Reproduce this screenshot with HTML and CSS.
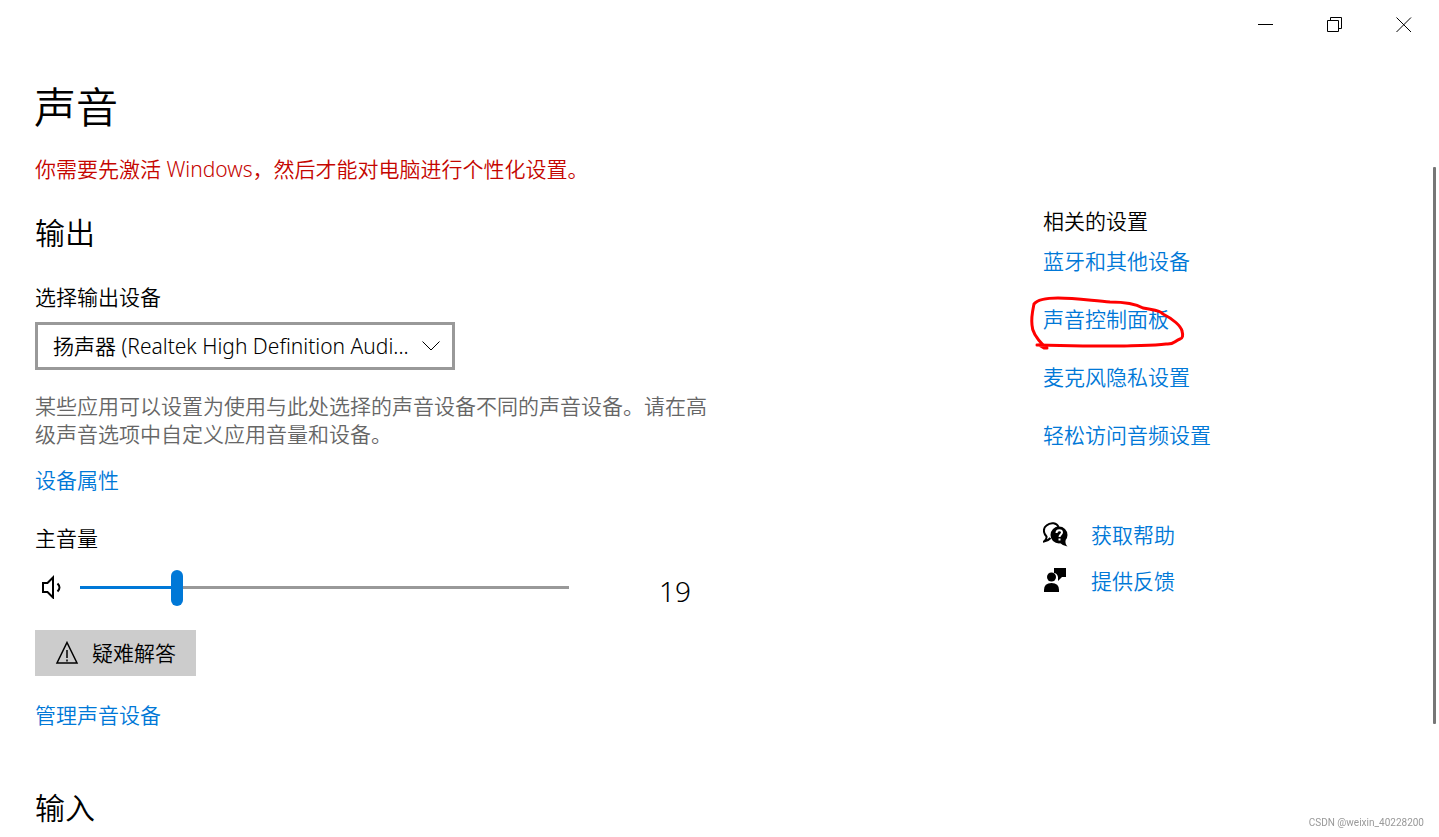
FILE: index.html
```html
<!DOCTYPE html>
<html lang="zh-CN">
<head>
    <meta charset="UTF-8">
    <meta name="viewport" content="width=device-width, initial-scale=1.0">
    <title>设置 - 声音</title>
    <link rel="stylesheet" href="styles.css">
</head>
<body>

    <header class="titlebar">
        <button type="button" class="window-button" aria-label="最小化">
            <svg width="16" height="16" viewBox="0 0 16 16"><path d="M0 7.5h15"/></svg>
        </button>
        <button type="button" class="window-button" aria-label="还原">
            <svg width="16" height="16" viewBox="0 0 16 16"><path d="M.5 3.5h11v11H.5zM3.5 3.5v-3h11v11h-3"/></svg>
        </button>
        <button type="button" class="window-button" aria-label="关闭">
            <svg width="16" height="16" viewBox="0 0 16 16"><path d="M.5.5l14.500 14.500M15 .5L.5 15"/></svg>
        </button>
    </header>

    <h1 class="page-title">声音</h1>

    <div class="layout">
        <main class="content">
            <p class="notice">你需要先激活 Windows，然后才能对电脑进行个性化设置。</p>

            <h2 class="section-title">输出</h2>
            <label class="field-label" for="outputDevice">选择输出设备</label>
            <div class="select-box">
                <select id="outputDevice" class="select">
                    <option>扬声器 (Realtek High Definition Audi...</option>
                </select>
                <svg class="select-arrow" width="18" height="10" viewBox="0 0 18 10"><path d="M.5.5L9 9 17.5.5"/></svg>
            </div>
            <p class="hint">某些应用可以设置为使用与此处选择的声音设备不同的声音设备。请在高级声音选项中自定义应用音量和设备。</p>
            <a class="link" href="#">设备属性</a>

            <label class="field-label" for="volume">主音量</label>
            <div class="volume">
                <svg class="speaker" width="24" height="24" viewBox="0 0 24 24">
                    <path d="M3 8h4.500L13 2.500v20L7.500 17H3zM17.500 8.500q4 4 0 8"/>
                </svg>
                <input type="range" id="volume" class="slider" min="0" max="100" value="19" style="--value: 19%">
                <output class="volume-value" for="volume">19</output>
            </div>

            <button type="button" class="button">
                <svg width="24" height="24" viewBox="0 0 24 24"><path d="M12 1.500L22 22H2zM12 9v8M12 18.500v2"/></svg>
                疑难解答
            </button>
            <a class="link" href="#">管理声音设备</a>

            <h2 class="section-title input-title">输入</h2>
        </main>

        <aside class="related">
            <h3 class="related-title">相关的设置</h3>
            <nav class="related-links">
                <a class="link" href="#">蓝牙和其他设备</a>
                <a class="link marked" href="#">声音控制面板
                    <svg class="pen" width="160" height="58" viewBox="0 0 160 58">
                        <path d="M16 51C8 43 4 37 4 30C3 22 5 14 6 9C10 4 20 3 30 3C48 3 66 6 82 7C96 7 108 9 115 13C124 15 132 15 135 19C145 24 153 31 154 36Q156 43 152 44C146 46 146 50 138 49C124 51 110 50 96 51H55L9 50M11 50l5 3h3"/>
                    </svg>
                </a>
                <a class="link" href="#">麦克风隐私设置</a>
                <a class="link" href="#">轻松访问音频设置</a>
            </nav>
            <nav class="support">
                <a class="link support-link" href="#">
                    <svg width="26" height="26" viewBox="0 0 26 26">
                        <path class="outline" d="M7.500 16Q5 19 1 19.500 4 17 3.500 14.500C0 11 0 6 3.500 3.500 8-.5 14 1 15.500 5"/>
                        <circle cx="16" cy="13" r="8.500"/>
                        <path d="M17 21q3 3 7.500 3.500Q22 22 22.500 18z"/>
                        <path class="question" d="M13.500 11c0-4 5.500-3.500 5.500-.5 0 2-2.500 2-2.500 4.500M16.500 16.500v2"/>
                    </svg>
                    获取帮助
                </a>
                <a class="link support-link" href="#">
                    <svg width="26" height="26" viewBox="0 0 26 26">
                        <path d="M11 0h12v9h-4l-4 4v-4q-1-4-4-4z"/>
                        <circle cx="8.500" cy="9" r="4.500"/>
                        <path d="M1 24v-2q0-7 7.500-7t7.500 7v2z"/>
                    </svg>
                    提供反馈
                </a>
            </nav>
        </aside>

        <div class="scrollbar"></div>
    </div>

    <div class="watermark">CSDN @weixin_40228200</div>

</body>
</html>
```
FILE: styles.css
```css
* {
    box-sizing: border-box;
}
body {
    margin: 0;
    height: 100vh;
    overflow: hidden;
    background-color: white;
    color: black;
    font-family: "Noto Sans", "Noto Sans CJK SC", sans-serif;
    font-size: 21px;
    font-weight: 350;
    line-height: 28px;
}
h1, h2, h3, p {
    margin: 0;
    font-weight: 350;
}
svg {
    flex: none;
}
.titlebar {
    display: flex;
    justify-content: flex-end;
    height: 50px;
    padding-right: 1px;
}
.window-button {
    display: flex;
    align-items: center;
    justify-content: center;
    width: 69px;
    padding: 0;
    border: none;
    background: none;
}
.window-button path {
    fill: none;
    stroke: black;
}
.page-title {
    padding: 29px 34px 0;
    font-size: 42px;
    line-height: 56px;
}
.layout {
    display: flex;
    align-items: flex-start;
    padding: 20px 3px 0 35px;
}
.content {
    flex: 1;
}
.notice {
    color: #c50500;
}
.section-title {
    margin-top: 30px;
    font-size: 30px;
    line-height: 40px;
}
.field-label {
    display: block;
    margin-top: 30px;
}
.select-box {
    display: flex;
    position: relative;
    width: 420px;
    height: 48px;
    margin-top: 11px;
}
.select {
    appearance: none;
    width: 100%;
    padding: 0 30px 0 15px;
    border: 3px solid #999;
    border-radius: 0;
    background-color: white;
    color: black;
    font: inherit;
}
.select-arrow {
    position: absolute;
    top: 19px;
    right: 15px;
    fill: none;
    stroke: black;
    pointer-events: none;
}
.hint {
    max-width: 680px;
    margin: 22px 0 18px;
    color: #666;
}
.link {
    display: block;
    width: max-content;
    color: #0078d7;
    text-decoration: none;
}
.volume {
    display: flex;
    align-items: center;
    max-width: 680px;
    margin-top: 17px;
}
.speaker {
    margin: 0 16px 0 5px;
    fill: none;
    stroke: black;
    stroke-width: 2;
}
.slider {
    appearance: none;
    width: 489px;
    height: 36px;
    margin: 0;
    background: none;
}
.slider::-webkit-slider-runnable-track {
    height: 3px;
    background: linear-gradient(to right, #0078d7 var(--value), #999 var(--value));
}
.slider::-webkit-slider-thumb {
    appearance: none;
    width: 12px;
    height: 36px;
    margin-top: -16px;
    border-radius: 6px;
    background-color: #0078d7;
}
.volume-value {
    margin-left: auto;
    padding: 8px 24px 0 0;
    font-size: 28px;
}
.button {
    display: flex;
    align-items: center;
    gap: 13px;
    height: 46px;
    margin: 25px 0;
    padding: 0 20px;
    border: none;
    background-color: #ccc;
    color: black;
    font: inherit;
}
.button path {
    fill: none;
    stroke: black;
    stroke-width: 1.5;
}
.input-title {
    margin-top: 59px;
}
.related {
    width: 390px;
    padding-top: 52px;
}
.related-title {
    font-size: 21px;
}
.related-links {
    display: flex;
    flex-direction: column;
    gap: 30px;
    margin-top: 12px;
}
.marked {
    position: relative;
}
.pen {
    position: absolute;
    top: -10px;
    left: -15px;
    fill: none;
    stroke: red;
    stroke-width: 3;
    stroke-linecap: round;
    stroke-linejoin: round;
}
.support {
    display: flex;
    flex-direction: column;
    gap: 18px;
    margin-top: 72px;
}
.support-link {
    display: flex;
    align-items: center;
    gap: 22px;
}
.support-link svg {
    fill: black;
}
.support-link .outline {
    fill: none;
    stroke: black;
    stroke-width: 2;
}
.support-link .question {
    fill: none;
    stroke: white;
    stroke-width: 2;
}
.scrollbar {
    width: 3px;
    height: calc(100vh - 280px);
    margin-top: 12px;
    border-radius: 1px;
    background-color: #767676;
}
.watermark {
    position: fixed;
    right: 15px;
    bottom: 8px;
    color: #999;
    font-family: Roboto, Arial, sans-serif;
    font-size: 10px;
    font-weight: 400;
    line-height: 12px;
}
```
